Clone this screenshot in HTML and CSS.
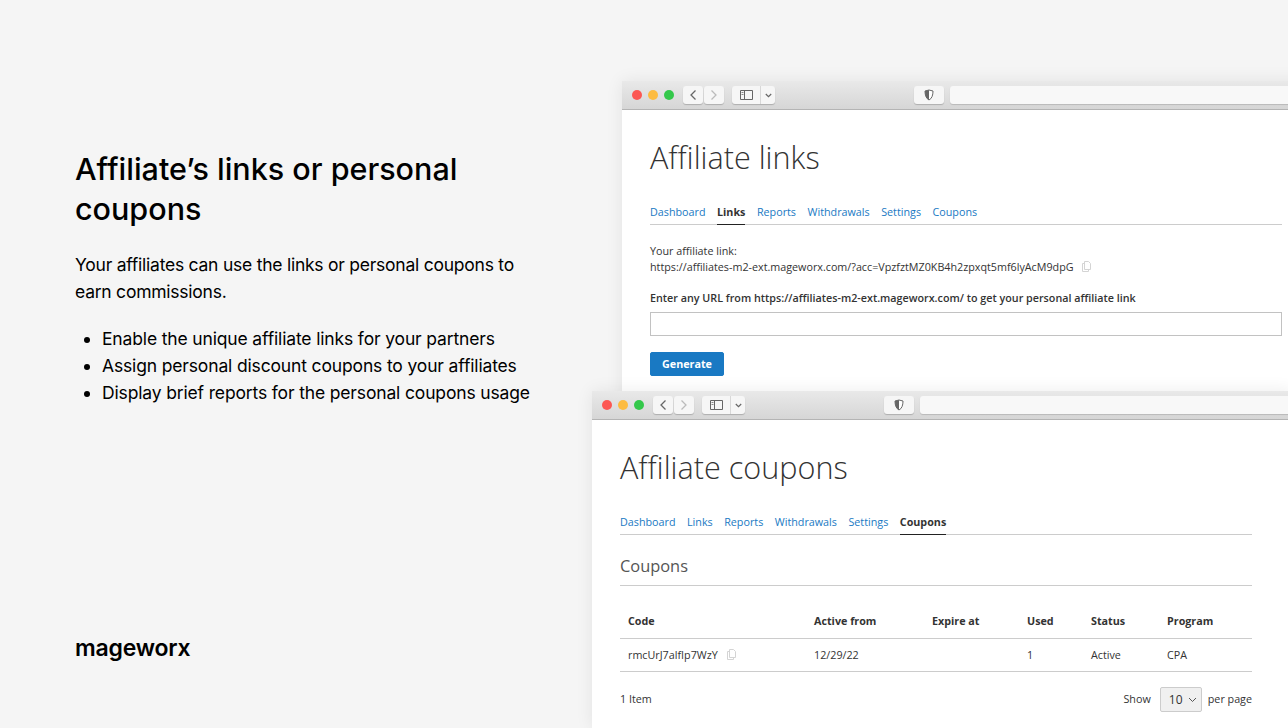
FILE: index.html
```html
<!DOCTYPE html>
<html lang="en">
<head>
    <meta charset="UTF-8">
    <meta name="viewport" content="width=device-width, initial-scale=1.0">
    <title>Affiliate's links or personal coupons</title>
    <link rel="stylesheet" href="styles.css">
</head>
<body>
    <div class="slide">
        <div class="intro">
            <div class="intro-text">
                <h2 class="headline">Affiliate’s links or personal coupons</h2>
                <p class="lead">Your affiliates can use the links or personal coupons to earn commissions.</p>
                <ul class="points">
                    <li>Enable the unique affiliate links for your partners</li>
                    <li>Assign personal discount coupons to your affiliates</li>
                    <li>Display brief reports for the personal coupons usage</li>
                </ul>
            </div>
            <div class="logo">mageworx</div>
        </div>

        <!-- first browser window -->
        <div class="window window-links">
            <div class="toolbar">
                <span class="dot red"></span><span class="dot yellow"></span><span class="dot green"></span>
                <div class="btn-group nav-group">
                    <span class="tool tool-nav"><svg width="8" height="12" viewBox="0 0 8 12"><path d="M6.500 1.500 2 6l4.500 4.500" fill="none" stroke="#666" stroke-width="1.3"/></svg></span>
                    <span class="tool tool-nav"><svg width="8" height="12" viewBox="0 0 8 12"><path d="M1.500 1.500 6 6l-4.500 4.500" fill="none" stroke="#bbb" stroke-width="1.3"/></svg></span>
                </div>
                <div class="tool tool-side">
                    <span class="side-main"><svg width="13" height="10" viewBox="0 0 13 10"><path d="M.5.5h12v9H.5zM4.500.5v9" fill="none" stroke="#666"/><path d="M1.500 2.500h2M1.500 4.500h2" stroke="#888"/></svg></span>
                    <span class="side-more"><svg width="7" height="5" viewBox="0 0 7 5"><path d="M.8 1 3.500 3.700 6.200 1" fill="none" stroke="#666" stroke-width="1.2"/></svg></span>
                </div>
                <span class="tool tool-shield"><svg width="10" height="12" viewBox="0 0 10 12"><path d="M5 1 1 2c0 4 1 7.500 4 9 3-1.500 4-5 4-9z" fill="#fff" stroke="#666"/><path d="M5 1 1 2c0 4 1 7.500 4 9z" fill="#666"/></svg></span>
                <span class="address"></span>
            </div>
            <div class="content">
                <h1 class="page-title">Affiliate links</h1>
                <div class="tabs">
                    <a class="tab">Dashboard</a>
                    <a class="tab active">Links</a>
                    <a class="tab">Reports</a>
                    <a class="tab">Withdrawals</a>
                    <a class="tab">Settings</a>
                    <a class="tab">Coupons</a>
                </div>
                <div class="link-label">Your affiliate link:</div>
                <div class="link-row">https://affiliates-m2-ext.mageworx.com/?acc=VpzfztMZ0KB4h2zpxqt5mf6lyAcM9dpG
                    <svg class="copy" width="10" height="11" viewBox="0 0 10 11"><path d="M2.500 8.500v-8h4l2 2v6zM2.500 2.500H.5v8h6v-2" fill="none" stroke="#d4d4d4"/></svg>
                </div>
                <label class="url-label">Enter any URL from https://affiliates-m2-ext.mageworx.com/ to get your personal affiliate link</label>
                <div class="url-input"></div>
                <button class="generate">Generate</button>
            </div>
        </div>

        <!-- second browser window -->
        <div class="window window-coupons">
            <div class="toolbar">
                <span class="dot red"></span><span class="dot yellow"></span><span class="dot green"></span>
                <div class="btn-group nav-group">
                    <span class="tool tool-nav"><svg width="8" height="12" viewBox="0 0 8 12"><path d="M6.500 1.500 2 6l4.500 4.500" fill="none" stroke="#666" stroke-width="1.3"/></svg></span>
                    <span class="tool tool-nav"><svg width="8" height="12" viewBox="0 0 8 12"><path d="M1.500 1.500 6 6l-4.500 4.500" fill="none" stroke="#bbb" stroke-width="1.3"/></svg></span>
                </div>
                <div class="tool tool-side">
                    <span class="side-main"><svg width="13" height="10" viewBox="0 0 13 10"><path d="M.5.5h12v9H.5zM4.500.5v9" fill="none" stroke="#666"/><path d="M1.500 2.500h2M1.500 4.500h2" stroke="#888"/></svg></span>
                    <span class="side-more"><svg width="7" height="5" viewBox="0 0 7 5"><path d="M.8 1 3.500 3.700 6.200 1" fill="none" stroke="#666" stroke-width="1.2"/></svg></span>
                </div>
                <span class="tool tool-shield"><svg width="10" height="12" viewBox="0 0 10 12"><path d="M5 1 1 2c0 4 1 7.500 4 9 3-1.500 4-5 4-9z" fill="#fff" stroke="#666"/><path d="M5 1 1 2c0 4 1 7.500 4 9z" fill="#666"/></svg></span>
                <span class="address"></span>
            </div>
            <div class="content">
                <h1 class="page-title">Affiliate coupons</h1>
                <div class="tabs">
                    <a class="tab">Dashboard</a>
                    <a class="tab">Links</a>
                    <a class="tab">Reports</a>
                    <a class="tab">Withdrawals</a>
                    <a class="tab">Settings</a>
                    <a class="tab active">Coupons</a>
                </div>
                <h3 class="section-title">Coupons</h3>
                <table class="coupons">
                    <thead>
                        <tr>
                            <th class="col-code">Code</th>
                            <th class="col-from">Active from</th>
                            <th class="col-expire">Expire at</th>
                            <th class="col-used">Used</th>
                            <th class="col-status">Status</th>
                            <th>Program</th>
                        </tr>
                    </thead>
                    <tbody>
                        <tr>
                            <td>rmcUrJ7alfIp7WzY <svg class="copy" width="10" height="11" viewBox="0 0 10 11"><path d="M2.500 8.500v-8h4l2 2v6zM2.500 2.500H.5v8h6v-2" fill="none" stroke="#d4d4d4"/></svg></td>
                            <td>12/29/22</td>
                            <td></td>
                            <td>1</td>
                            <td>Active</td>
                            <td>CPA</td>
                        </tr>
                    </tbody>
                </table>
                <div class="pager">
                    <span>1 Item</span>
                    <div class="per-page">
                        <span>Show</span>
                        <span class="limit">10 <svg width="9" height="6" viewBox="0 0 9 6"><path d="M1 1l3.500 3.500L8 1" fill="none" stroke="#555"/></svg></span>
                        <span>per page</span>
                    </div>
                </div>
            </div>
        </div>
    </div>
</body>
</html>
```

FILE: styles.css
```css
html, body {
    margin: 0;
    padding: 0;
}
.slide {
    position: relative;
    width: 1288px;
    height: 728px;
    overflow: hidden;
    background: #f5f5f5;
    color: #000;
    font-family: 'Inter', sans-serif;
}
.intro {
    box-sizing: border-box;
    width: 570px;
    height: 728px;
    padding: 149px 0 67px 75px;
    display: flex;
    flex-direction: column;
    justify-content: space-between;
}
.headline {
    margin: 0 0 22px;
    font-size: 30.5px;
    line-height: 40px;
    font-weight: 500;
    width: 440px;
}
.lead {
    margin: 0 0 20px;
    font-size: 17.5px;
    line-height: 27px;
    letter-spacing: -0.24px;
    width: 460px;
}
.points {
    margin: 0;
    padding-left: 27px;
    font-size: 17.5px;
    line-height: 27px;
    letter-spacing: -0.15px;
}
.logo {
    font-size: 23px;
    line-height: 26px;
    font-weight: 600;
    letter-spacing: -0.2px;
}

/* browser windows */
.window {
    position: absolute;
    width: 700px;
    background: #fff;
    box-shadow: 0 0 16px rgba(0, 0, 0, 0.08);
    font-family: 'Open Sans', sans-serif;
    color: #333;
}
.window-links {
    left: 622px;
    top: 81px;
    height: 320px;
}
.window-coupons {
    left: 592px;
    top: 391px;
    height: 337px;
}
.toolbar {
    box-sizing: border-box;
    height: 29px;
    padding-left: 10px;
    display: flex;
    align-items: center;
    background: linear-gradient(#e9e9e9, #d6d6d6);
    border-bottom: 1px solid #b4b4b4;
}
.dot {
    width: 10px;
    height: 10px;
    border-radius: 50%;
    margin-right: 6px;
}
.red { background: #fc5753; }
.yellow { background: #fdbc40; }
.green { background: #34c84a; }
.btn-group {
    display: flex;
    gap: 1px;
}
.nav-group {
    margin-left: 3px;
}
.tool {
    height: 18px;
    display: flex;
    align-items: center;
    justify-content: center;
    background: #f6f6f6;
    border-radius: 3px;
    box-shadow: 0 1px 1px rgba(0, 0, 0, 0.2);
}
.tool-nav {
    width: 20px;
}
.tool-side {
    margin-left: 8px;
    width: 43px;
}
.side-main {
    flex: 1;
    display: flex;
    justify-content: center;
    border-right: 1px solid #d8d8d8;
    height: 18px;
    align-items: center;
}
.side-more {
    width: 14px;
    display: flex;
    justify-content: center;
}
.tool-shield {
    margin-left: 139px;
    width: 30px;
}
.address {
    margin-left: 6px;
    flex: 1;
    height: 18px;
    background: #f8f8f8;
    border-radius: 3px;
    box-shadow: 0 1px 1px rgba(0, 0, 0, 0.15);
}
.content {
    width: 632px;
    padding: 0 28px;
}
.page-title {
    margin: 25px 0 26px;
    font-size: 30.6px;
    line-height: 44px;
    font-weight: 300;
}
.tabs {
    display: flex;
    gap: 11.5px;
    height: 19px;
    border-bottom: 1px solid #ccc;
    font-size: 10.75px;
    line-height: 15px;
}
.tab {
    color: #1979c3;
    height: 19px;
}
.tab.active {
    color: #333;
    font-weight: 700;
    border-bottom: 1px solid #222;
}
.link-label {
    margin-top: 18px;
    font-size: 10.75px;
    line-height: 16px;
}
.link-row {
    font-size: 10.75px;
    line-height: 16px;
}
.copy {
    margin-left: 6px;
    vertical-align: -1px;
}
.url-label {
    display: block;
    margin-top: 16px;
    font-size: 10.75px;
    line-height: 15px;
    font-weight: 600;
}
.url-input {
    box-sizing: border-box;
    height: 24px;
    margin-top: 6px;
    border: 1px solid #c2c2c2;
}
.generate {
    display: block;
    margin-top: 16px;
    width: 74px;
    height: 24px;
    padding: 0;
    background: #1979c3;
    border: 1px solid #1979c3;
    border-radius: 2px;
    color: #fff;
    font-family: 'Open Sans', sans-serif;
    font-size: 10.75px;
    font-weight: 700;
}
.section-title {
    margin: 20px 0 0;
    padding-bottom: 8px;
    border-bottom: 1px solid #ccc;
    color: #555;
    font-size: 16.4px;
    line-height: 22px;
    font-weight: 400;
}
.coupons {
    width: 100%;
    margin-top: 28px;
    border-collapse: collapse;
    table-layout: fixed;
    font-size: 10.75px;
    line-height: 15px;
}
.coupons th,
.coupons td {
    padding: 0 8px;
    text-align: left;
    border-bottom: 1px solid #ccc;
}
.coupons th {
    padding-bottom: 9px;
    font-weight: 700;
}
.coupons td {
    height: 32px;
}
.col-code { width: 170px; }
.col-from { width: 102px; }
.col-expire { width: 79px; }
.col-used { width: 48px; }
.col-status { width: 60px; }
.pager {
    display: flex;
    justify-content: space-between;
    align-items: center;
    margin-top: 13px;
    font-size: 10.75px;
}
.per-page {
    display: flex;
    align-items: center;
    gap: 6px;
}
.limit {
    box-sizing: border-box;
    width: 42px;
    height: 25px;
    margin: 2px 0 0 3px;
    display: flex;
    align-items: center;
    gap: 5px;
    padding-left: 8px;
    background: #f0f0f0;
    border: 1px solid #ccc;
    border-radius: 2px;
    font-size: 12px;
}
```
